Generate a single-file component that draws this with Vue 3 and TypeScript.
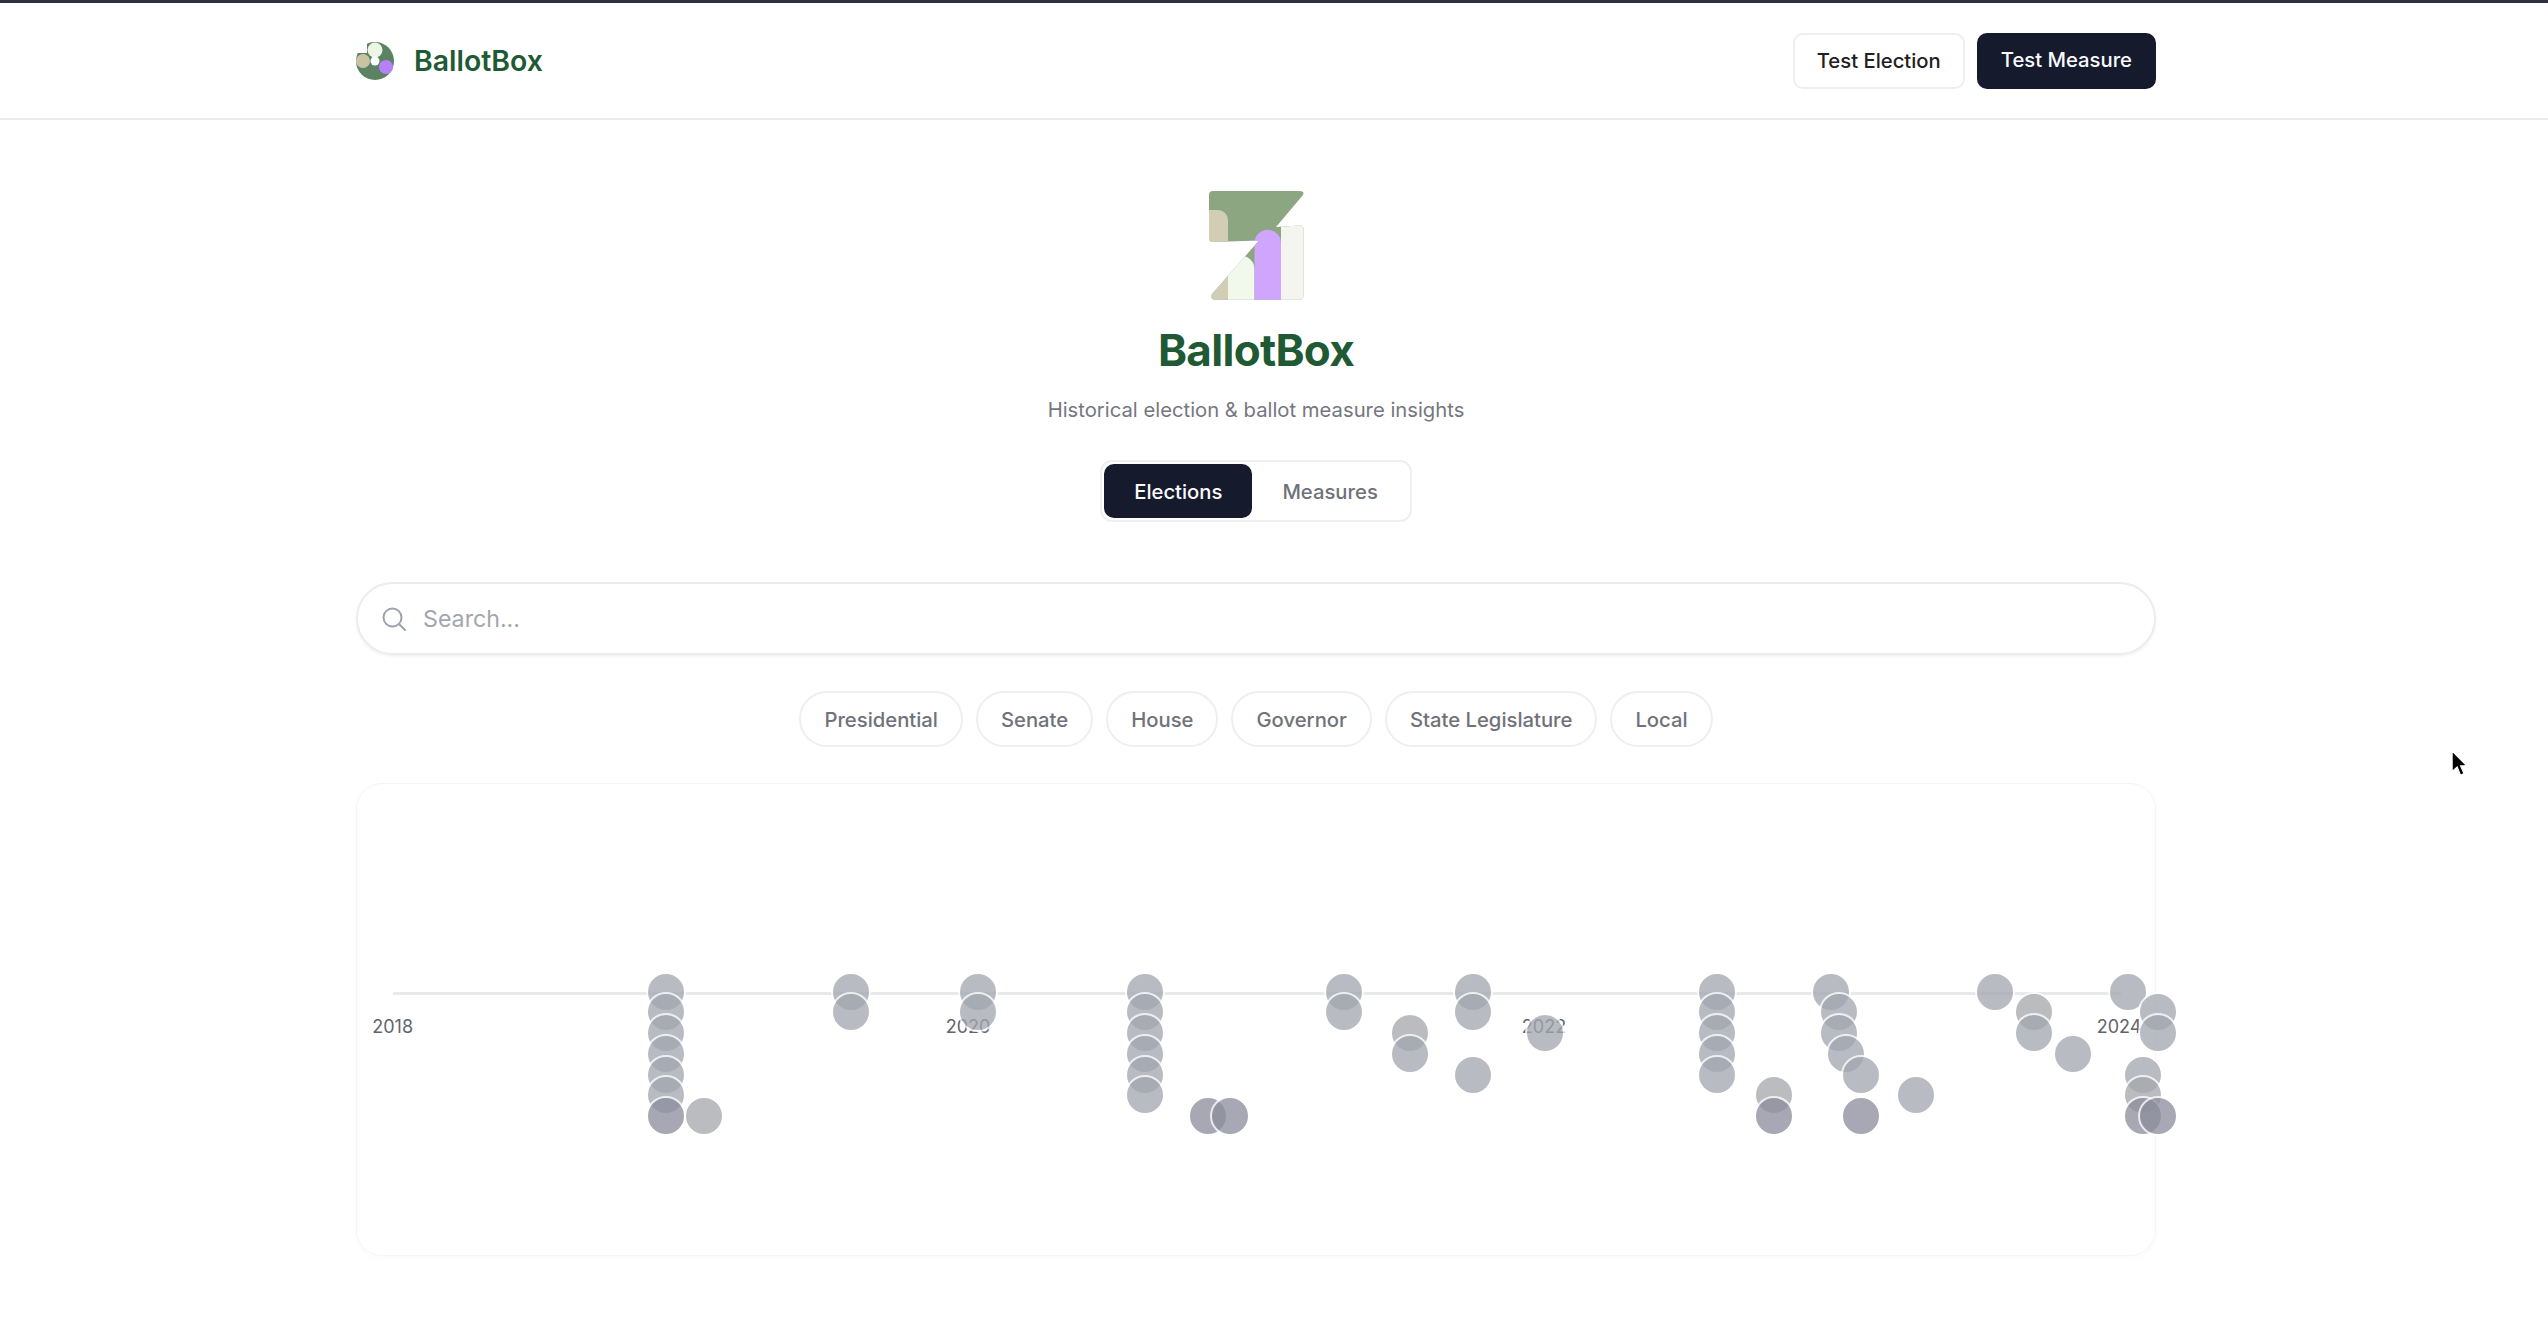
<template>
  <div class="page">
    <div class="topbar"></div>

    <header class="site-header">
      <div class="header-inner">
        <div class="brand">
          <svg class="brand-mark" viewBox="0 0 38 38" aria-hidden="true">
            <circle cx="19" cy="19" r="19" fill="#5b8263" />
            <rect x="0" y="0" width="11" height="11" fill="#ffffff" />
            <circle cx="19" cy="8" r="7.5" fill="#edf5e4" />
            <circle cx="7" cy="19" r="7" fill="#c9c3a4" />
            <circle cx="30" cy="25" r="7" fill="#b880f6" />
            <circle cx="19" cy="19" r="4.5" fill="#ffffff" />
          </svg>
          <span class="brand-name">BallotBox</span>
        </div>
        <div class="header-actions">
          <button class="btn btn-light">Test Election</button>
          <button class="btn btn-dark">Test Measure</button>
        </div>
      </div>
    </header>

    <main class="content">
      <section class="hero">
        <svg class="hero-mark" viewBox="0 0 95 109" aria-hidden="true">
          <defs>
            <clipPath id="bolt">
              <path d="M4 0H90Q96 0 94 4L67 36L91 34.5Q94.5 34.5 94.5 38V105Q94.5 108.7 90 108.7H6Q1 108.7 3 103L50 49.5L4 51Q0 51 0 47V4Q0 0 4 0Z" />
            </clipPath>
          </defs>
          <g clip-path="url(#bolt)">
            <rect width="95" height="109" fill="#8da682" />
            <path d="M0 19H9A10 10 0 0 1 19 29V52H0Z" fill="#d2ceb6" />
            <rect x="0" y="70" width="20" height="39" fill="#d2ceb6" />
            <path d="M19 109V78A13 13 0 0 1 45.5 78V109Z" fill="#f0f9ec" />
            <path d="M45.5 109V52A13 13 0 0 1 72 52V109Z" fill="#cfa6fb" />
            <rect x="72" y="33" width="23" height="76" fill="#f4f5ee" />
          </g>
        </svg>
        <h1 class="hero-title">BallotBox</h1>
        <p class="hero-sub">Historical election &amp; ballot measure insights</p>
        <div class="mode-toggle">
          <button class="mode active">Elections</button>
          <button class="mode">Measures</button>
        </div>
      </section>

      <div class="search">
        <svg class="search-icon" viewBox="0 0 24 24" fill="none" stroke="currentColor" stroke-width="2" stroke-linecap="round" aria-hidden="true">
          <circle cx="10.5" cy="10.5" r="9" />
          <path d="M17 17l6 6" />
        </svg>
        <span class="search-text">Search...</span>
      </div>

      <div class="chips">
        <button v-for="chip in chips" :key="chip" class="chip">{{ chip }}</button>
      </div>

      <section class="timeline-card">
        <div class="axis"></div>
        <span
          v-for="year in years"
          :key="year.label"
          class="year"
          :style="{ left: year.x + 'px' }"
        >{{ year.label }}</span>
        <span
          v-for="(dot, index) in dots"
          :key="index"
          class="dot"
          :class="dot.tone"
          :style="{ left: dot.x - 357 - 20 + 'px', top: rowTop(dot.row) + 'px' }"
        ></span>
      </section>
    </main>

    <svg class="cursor" viewBox="0 0 16 24" aria-hidden="true">
      <path d="M1 1V19L5.5 15L8.5 22.5L11.5 21L8.5 14H14Z" fill="#000" stroke="#fff" stroke-width="1" />
    </svg>
  </div>
</template>

<script setup lang="ts">
type Tone = 'cool' | 'dark' | 'warm';

interface Dot {
  x: number;
  row: number;
  tone: Tone;
}

const chips = ['Presidential', 'Senate', 'House', 'Governor', 'State Legislature', 'Local'];

const years = [
  { label: '2018', x: 35.7 },
  { label: '2020', x: 611 },
  { label: '2022', x: 1187 },
  { label: '2024', x: 1762 }
];

// [x on the page, rows stacked at that date]
const columns: [number, number[]][] = [
  [666.4, [0, 1, 2, 3, 4, 5]],
  [851.3, [0, 1]],
  [977.5, [0, 1]],
  [1144.6, [0, 1, 2, 3, 4, 5]],
  [1344, [0, 1]],
  [1409.5, [2, 3]],
  [1472.6, [0, 1, 4]],
  [1544.9, [2]],
  [1717, [0, 1, 2, 3, 4]],
  [1774, [5]],
  [1831, [0]],
  [1839, [1, 2]],
  [1846, [3]],
  [1861.4, [4]],
  [1915.7, [5]],
  [1994.6, [0]],
  [2034, [1, 2]],
  [2073, [3]],
  [2128, [0]],
  [2158, [1, 2]],
  [2143, [4, 5]]
];

const warm = new Set(['1409.5:2', '2034:1', '2143:5', '1774:5']);

const dots: Dot[] = columns.flatMap(([x, rows]) =>
  rows.map((row) => ({ x, row, tone: (warm.has(x + ':' + row) ? 'warm' : 'cool') as Tone }))
);

// bottom row: dark dots, one light one
dots.splice(6, 0, { x: 666.4, row: 6, tone: 'dark' }, { x: 704.4, row: 6, tone: 'warm' });
dots.push(
  { x: 1207.7, row: 6, tone: 'dark' },
  { x: 1230.4, row: 6, tone: 'dark' },
  { x: 1774, row: 6, tone: 'dark' },
  { x: 1861.4, row: 6, tone: 'dark' },
  { x: 2143, row: 6, tone: 'dark' },
  { x: 2158, row: 6, tone: 'dark' }
);

// first row sits at y=991.7 on the page, card inner box starts at 784
const rowTop = (row: number) => 991.7 - 784 - 20 + row * 20.75;
</script>

<style>
html,
body {
  margin: 0;
  background: #fff;
}
</style>

<style scoped>
.page {
  position: relative;
  height: 1330px;
  overflow: hidden;
  font-family: Inter, "Noto Sans", sans-serif;
  color: #111827;
}

.topbar {
  height: 3px;
  background: #2e3043;
}

/* Header */
.site-header {
  height: 115px;
  border-bottom: 2px solid #e9eaec;
}

.header-inner {
  width: 1800px;
  height: 100%;
  margin-left: 356px;
  display: flex;
  align-items: center;
  justify-content: space-between;
}

.brand {
  display: flex;
  align-items: center;
  gap: 20px;
}

.brand-mark {
  width: 38px;
  height: 38px;
  border-radius: 50%;
  overflow: visible;
}

.brand-name {
  font-size: 28.4px;
  font-weight: 600;
  color: #1f5a34;
}

.header-actions {
  display: flex;
  gap: 12px;
}

.btn {
  height: 56px;
  padding: 0 22px;
  border-radius: 10px;
  font-family: inherit;
  font-size: 20.25px;
  font-weight: 450;
}

.btn-light {
  background: #fff;
  border: 2px solid #eeeff1;
  color: #1f2023;
}

.btn-dark {
  background: #161a2d;
  border: 2px solid #161a2d;
  color: #f9fafb;
  padding-bottom: 3px;
}

/* Hero */
.content {
  width: 1800px;
  margin-left: 356px;
}

.hero {
  display: flex;
  flex-direction: column;
  align-items: center;
  padding-top: 71px;
}

.hero-mark {
  width: 95px;
  height: 109px;
}

.hero-title {
  margin: 24px 0 0;
  font-size: 44px;
  line-height: 53px;
  font-weight: 700;
  letter-spacing: -0.016em;
  color: #1f5a34;
}

.hero-sub {
  margin: 17px 0 0;
  font-size: 20.25px;
  line-height: 32px;
  color: #75777e;
}

.mode-toggle {
  display: flex;
  margin-top: 34px;
  padding: 2px;
  border: 2px solid #eeeff1;
  border-radius: 12px;
}

.mode {
  height: 54px;
  padding: 0 30px;
  border: none;
  border-radius: 10px;
  background: transparent;
  font-family: inherit;
  font-size: 20.25px;
  font-weight: 450;
  color: #6f7279;
}

.mode.active {
  background: #161a2d;
  color: #f9fafb;
}

/* Search */
.search {
  display: flex;
  align-items: center;
  gap: 17px;
  height: 73px;
  margin-top: 60px;
  padding: 0 24px;
  box-sizing: border-box;
  border: 2px solid #ebecee;
  border-radius: 37px;
  box-shadow: 0 2px 3px rgba(0, 0, 0, 0.05);
}

.search-icon {
  width: 24px;
  height: 24px;
  color: #9ca3af;
}

.search-text {
  font-size: 23.2px;
  color: #a3a6ae;
}

/* Filters */
.chips {
  display: flex;
  justify-content: center;
  gap: 13px;
  margin-top: 36px;
}

.chip {
  height: 56px;
  padding: 0 23px;
  border: 2px solid #eeeff1;
  border-radius: 28px;
  background: #fff;
  font-family: inherit;
  font-size: 20.25px;
  font-weight: 450;
  color: #6f7279;
}

/* Timeline */
.timeline-card {
  position: relative;
  height: 473px;
  margin-top: 36px;
  box-sizing: border-box;
  border: 1px solid #f4f5f6;
  border-radius: 26px;
  box-shadow: 0 2px 6px rgba(0, 0, 0, 0.025);
}

.axis {
  position: absolute;
  left: 36px;
  top: 208px;
  width: 1728px;
  height: 3px;
  background: #e8e9eb;
}

.year {
  position: absolute;
  top: 232px;
  transform: translateX(-50%);
  font-size: 18px;
  line-height: 22px;
  color: #62646b;
}

.dot {
  position: absolute;
  width: 40px;
  height: 40px;
  box-sizing: border-box;
  border: 2px solid #fff;
  border-radius: 50%;
  opacity: 0.76;
}

.dot.cool {
  background: #a2a7b0;
}

.dot.dark {
  background: #8c8e9c;
}

.dot.warm {
  background: #a7a8ad;
}

/* Mouse pointer caught in the capture */
.cursor {
  position: absolute;
  left: 2451px;
  top: 750px;
  width: 18px;
  height: 27px;
}
</style>
